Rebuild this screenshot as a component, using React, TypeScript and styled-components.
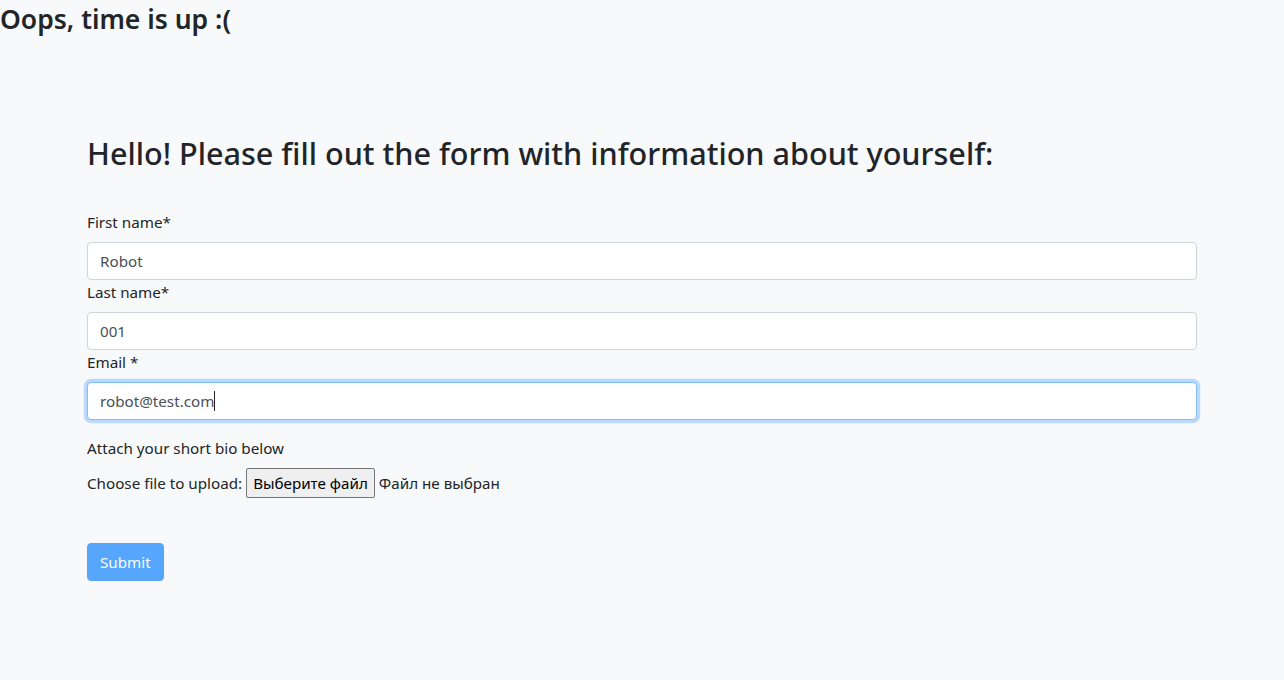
import React from "react";
import styled, { createGlobalStyle, css } from "styled-components";

const FONT = `"Noto Sans", "Open Sans", Arial, sans-serif`;

const Global = createGlobalStyle`
  html, body { margin: 0; padding: 0; }
  body {
    background: #f8f9fa;
    color: #212529;
    font-family: ${FONT};
    font-size: 15.2px;
    line-height: 1.5;
  }
  * { box-sizing: border-box; }
`;

const Page = styled.div`
  min-height: 680px;
  background: #f8f9fa;
`;

const TimeUp = styled.h3`
  margin: 0;
  font-size: 26.5px;
  font-weight: 600;
  line-height: 38px;
  color: #212529;
`;

const Container = styled.div`
  max-width: 1140px;
  margin: 0 auto;
  padding: 96px 15px 0;
`;

const Title = styled.h2`
  margin: 0 0 38px;
  font-size: 30.6px;
  font-weight: 500;
  line-height: 38px;
`;

const Form = styled.form`
  display: flex;
  flex-direction: column;
`;

const Label = styled.label`
  display: block;
  margin-bottom: 8px;
  line-height: 24px;
`;

const Field = styled.div`
  position: relative;
`;

const Input = styled.input<{ $focused?: boolean }>`
  display: block;
  width: 100%;
  height: 38px;
  padding: 6px 12px;
  font-family: inherit;
  font-size: 15.2px;
  line-height: 24px;
  color: #495057;
  background: #fff;
  border: 1px solid #ced4da;
  border-radius: 4px;
  outline: none;
  ${(p) =>
    p.$focused &&
    css`
      border-color: #80bdff;
      box-shadow: 0 0 0 3.2px rgba(0, 123, 255, 0.25);
    `}
`;

const Caret = styled.span<{ $left: number }>`
  position: absolute;
  top: 9px;
  left: ${(p) => p.$left}px;
  width: 1px;
  height: 20px;
  background: #212529;
`;

const Text = styled.p`
  margin: 16px 0 0;
  line-height: 24px;
`;

const FileRow = styled.div`
  display: flex;
  align-items: center;
  gap: 4px;
  margin-top: 8px;
  line-height: 24px;
`;

const FileButton = styled.span`
  display: inline-flex;
  align-items: center;
  height: 30px;
  padding: 0 6px;
  background: #efefef;
  border: 1px solid #767676;
  border-radius: 2px;
  color: #000;
`;

const FileStatus = styled.span`
  color: #212529;
`;

const SubmitButton = styled.button`
  align-self: flex-start;
  margin-top: 45px;
  height: 38px;
  padding: 6px 12px;
  font-family: inherit;
  font-size: 15.2px;
  line-height: 24px;
  color: #fff;
  background: #007bff;
  border: 1px solid #007bff;
  border-radius: 4px;
  opacity: 0.65;
`;

export default function App() {
  return (
    <Page>
      <Global />
      <TimeUp>Oops, time is up :(</TimeUp>
      <Container>
        <Title>Hello! Please fill out the form with information about yourself:</Title>
        <Form onSubmit={(e) => e.preventDefault()}>
          <Label htmlFor="first">First name*</Label>
          <Input id="first" defaultValue="Robot" />
          <Label htmlFor="last">Last name*</Label>
          <Input id="last" defaultValue="001" />
          <Label htmlFor="email">Email *</Label>
          <Field>
            <Input id="email" defaultValue="robot@test.com" $focused />
            <Caret $left={127} />
          </Field>
          <Text>Attach your short bio below</Text>
          <FileRow>
            <span>Choose file to upload:</span>
            <FileButton>Выберите файл</FileButton>
            <FileStatus>Файл не выбран</FileStatus>
          </FileRow>
          <SubmitButton type="submit" disabled>
            Submit
          </SubmitButton>
        </Form>
      </Container>
    </Page>
  );
}
